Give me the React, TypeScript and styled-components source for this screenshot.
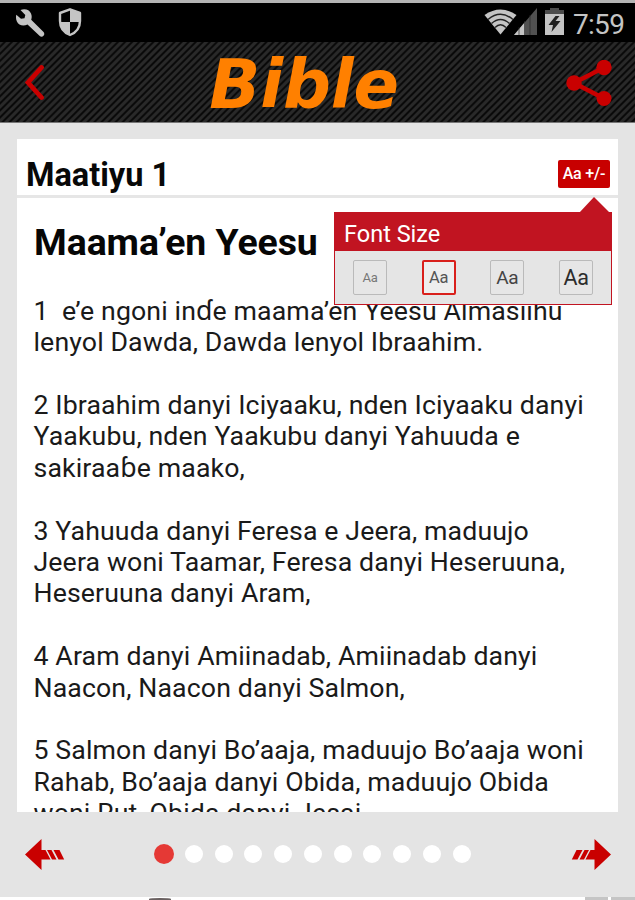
import React from "react";
import styled, { createGlobalStyle } from "styled-components";

const Global = createGlobalStyle`
  * { box-sizing: border-box; }
  body { margin: 0; background: #fff; font-family: Roboto, "Noto Sans", sans-serif; }
`;

const Screen = styled.div`
  width: 635px;
  height: 900px;
  overflow: hidden;
  display: flex;
  flex-direction: column;
  background: #e4e4e4;
`;

const StatusBar = styled.div`
  height: 42px;
  flex: none;
  background: #000;
  border-top: 3px solid #b4b4b4;
  display: flex;
  justify-content: space-between;
  padding: 0 9px 0 16px;
`;

const StatusGroup = styled.div`
  display: flex;
  padding-top: 6px;
`;

const Icon = styled.svg<{ $gap?: number; $top?: number }>`
  display: block;
  flex: none;
  margin-right: ${(p) => p.$gap ?? 0}px;
  margin-top: ${(p) => p.$top ?? 0}px;
`;

const Clock = styled.span`
  font-size: 28px;
  line-height: 31px;
  width: 53px;
  letter-spacing: -0.7px;
  white-space: nowrap;
  color: #c4c4c4;
`;

const TitleBar = styled.header`
  height: 81px;
  flex: none;
  display: flex;
  justify-content: space-between;
  padding: 0 23px 0 25px;
  border-bottom: 1px solid #777;
  background: repeating-linear-gradient(135deg, #292929 0 1.8px, #090909 3px 3.8px, #292929 5px);
`;

const Title = styled.h1`
  margin: 0 0 0 -3px;
  font: italic bold 67px/86px "DejaVu Sans", sans-serif;
  letter-spacing: -0.2px;
  color: #ff8000;
`;

const Card = styled.main`
  margin: 16px 17px 0;
  height: 673px;
  flex: none;
  background: #fff;
  position: relative;
  display: flex;
  flex-direction: column;
`;

const CardHead = styled.div`
  height: 59px;
  flex: none;
  border-bottom: 3px solid #e6e6e6;
  display: flex;
  justify-content: space-between;
  padding: 0 8px 0 9px;
`;

const Chapter = styled.h2`
  margin: 0;
  font-size: 32.5px;
  font-weight: 700;
  line-height: 73px;
  color: #080808;
`;

const SizeToggle = styled.button`
  width: 52px;
  height: 28px;
  margin-top: 21px;
  padding: 0;
  border: 0;
  border-radius: 2px;
  background: #c80000;
  color: #fff;
  font: 500 16px/28px Roboto, sans-serif;
  letter-spacing: -0.2px;
  white-space: nowrap;
`;

const Passage = styled.article`
  flex: 1;
  min-height: 0;
  overflow: hidden;
  padding: 23px 0 0 17px;
`;

const PassageTitle = styled.h3`
  margin: 0 0 31.8px;
  font-size: 37.4px;
  font-weight: 700;
  line-height: 43px;
  letter-spacing: -0.05px;
  color: #060606;
`;

const Verse = styled.p`
  margin: 0 0 31.4px;
`;

const Line = styled.span`
  display: block;
  width: max-content;
  font-size: 26.7px;
  line-height: 31.4px;
  white-space: pre;
  letter-spacing: 0.12px;
  margin-left: -0.5px;
  color: #1a1a1a;
`;

const Popover = styled.section`
  position: absolute;
  top: 73px;
  left: 317px;
  width: 278px;
  height: 93px;
  border: 1px solid #c11421;
  background: #e5e5e5;
`;

const Pointer = styled.svg`
  position: absolute;
  right: 0;
  top: -16px;
`;

const PopoverHead = styled.div`
  height: 38px;
  padding-left: 9px;
  font-size: 23.5px;
  line-height: 42px;
  color: #fff;
  background: #c11421;
`;

const Options = styled.div`
  display: flex;
  justify-content: space-between;
  padding: 9px 18px 0;
`;

const Option = styled.button<{ $size: number; $active?: boolean; $color: string }>`
  width: 34px;
  height: 35px;
  padding: 0;
  border: ${(p) => (p.$active ? "2px solid #d9201c" : "1px solid #bababa")};
  border-radius: 2px;
  background: ${(p) => (p.$active ? "#eeeeee" : "#e6e6e6")};
  font-family: Roboto, sans-serif;
  font-size: ${(p) => p.$size}px;
  line-height: 30px;
  letter-spacing: -0.3px;
  color: ${(p) => p.$color};
`;

const Pager = styled.nav`
  height: 85px;
  flex: none;
  display: flex;
  align-items: center;
  padding: 0 24px 1px 25px;
`;

const Dots = styled.div`
  display: flex;
  align-items: center;
  gap: 11.75px;
  margin: 0 auto 0 90px;
`;

const Dot = styled.i<{ $active?: boolean }>`
  width: 18px;
  height: 18px;
  border-radius: 50%;
  background: ${(p) => (p.$active ? "#e53935" : "#fff")};
  transform: scale(${(p) => (p.$active ? 1.11 : 1)});
`;

const NextPage = styled.div`
  height: 3px;
  flex: none;
  background: #fff;
  display: flex;
`;

const Knob = styled.i`
  width: 22px;
  height: 2px;
  margin: 1px 0 0 149px;
  border-radius: 50% 50% 0 0;
  background: #6a6161;
`;

const Tab = styled.i<{ $left: number; $width: number }>`
  margin-left: ${(p) => p.$left}px;
  width: ${(p) => p.$width}px;
  background: #c5c5c5;
`;

const sizes = [
  { size: 13, color: "#777" },
  { size: 16.5, color: "#555", active: true },
  { size: 19, color: "#444" },
  { size: 21.5, color: "#2c2c2c" },
];

const verses = [
  ["1  e’e ngoni inɗe maama’en Yeesu Almasiihu", "lenyol Dawda, Dawda lenyol Ibraahim."],
  ["2 Ibraahim danyi Iciyaaku, nden Iciyaaku danyi", "Yaakubu, nden Yaakubu danyi Yahuuda e", "sakiraaɓe maako,"],
  ["3 Yahuuda danyi Feresa e Jeera, maduujo", "Jeera woni Taamar, Feresa danyi Heseruuna,", "Heseruuna danyi Aram,"],
  ["4 Aram danyi Amiinadab, Amiinadab danyi", "Naacon, Naacon danyi Salmon,"],
  ["5 Salmon danyi Bo’aaja, maduujo Bo’aaja woni", "Rahab, Bo’aaja danyi Obida, maduujo Obida", "woni Rut, Obida danyi Jesai,"],
];

const ArrowShape = () => (
  <g fill="#c90000">
    <path d="M0 15.500 16.500 0v11H20.500l5 9.500h-9v10.500Z" />
    <path d="M22 11h4.500l5 9.500h-4.500ZM28.500 11h6l4.700 9.500h-5.700Z" />
  </g>
);

export default function App() {
  return (
    <>
      <Global />
      <Screen>
        <StatusBar>
          <StatusGroup>
            <Icon width="29" height="29" viewBox="0 0 29 29" $gap={13}>
              <path d="M4.500 1C9-.8 13.500.8 15 4.500c1 2.300.8 4.300.2 6.200L27.300 22.800c2.800 3-1 6.500-3.800 4L11.500 15.500C7 18 2.500 16 .9 12.500-.2 10-.2 8 .3 5.700L5 9.700l3.500-.5L9.300 6Z" fill="#c4c4c4" />
            </Icon>
            <Icon width="25" height="29" viewBox="0 0 25 29" $top={-1}>
              <path d="M12 1.300 22 5v8c0 7-3.700 11.500-10 14C5.700 24.500 2 20 2 13V5Z" fill="#000" stroke="#c4c4c4" strokeWidth="2.400" strokeLinejoin="round" />
              <path d="M12 1.300 22 5v9H12ZM2 14h10v13C5.700 24.500 2 20 2 14Z" fill="#c4c4c4" />
            </Icon>
          </StatusGroup>
          <StatusGroup>
            <Icon width="33" height="26" viewBox="0 0 33 26" $gap={-3}>
              <path d="M.5 6Q16.500-5 32.500 6L16.500 25.500Z" fill="#c4c4c4" />
              <path d="M4 10.500Q16.500 0 29 10.500M7.500 14.500Q16.500 6.500 25.500 14.500M11 18.500Q16.500 13 22 18.500" fill="none" stroke="#222" strokeWidth="1.500" />
            </Icon>
            <Icon width="24" height="27" viewBox="0 0 24 27" $gap={7} $top={-1}>
              <path d="M0 27 23 0v27Z" fill="#515151" />
              <path d="M0 27 11 14v13Z" fill="#c4c4c4" />
              <path d="M5 19v8M10.500 13v14M16 7v20" stroke="#252525" strokeWidth=".7" />
            </Icon>
            <Icon width="19" height="27" viewBox="0 0 19 27" $gap={9} $top={-1}>
              <path d="M5 0h9v2h5v4H0V2h5Z" fill="#4c4c4c" />
              <path d="M0 6h19v21H0Z" fill="#c4c4c4" />
              <path d="m10.500 8-7 9h4.500l-1.500 7 9-11h-5l4-5Z" fill="#202020" />
            </Icon>
            <Clock>7:59</Clock>
          </StatusGroup>
        </StatusBar>
        <TitleBar>
          <Icon width="20" height="36" viewBox="0 0 20 36" $top={23}>
            <path d="M16.500 2.500 3 17.500 16.500 32.500" fill="none" stroke="#c90000" strokeWidth="4.800" strokeLinecap="round" />
          </Icon>
          <Title>Bible</Title>
          <Icon width="46" height="46" viewBox="0 0 46 46" $top={18}>
            <path d="M38 7.500 8 23l30 15.500" fill="none" stroke="#c90000" strokeWidth="4.500" />
            <g fill="#c90000"><circle cx="38" cy="7.500" r="7.700" /><circle cx="8" cy="23" r="7.700" /><circle cx="38" cy="38.500" r="7.500" /></g>
          </Icon>
        </TitleBar>
        <Card>
          <CardHead>
            <Chapter>Maatiyu 1</Chapter>
            <SizeToggle>Aa +/-</SizeToggle>
          </CardHead>
          <Passage>
            <PassageTitle>Maama’en Yeesu</PassageTitle>
            {verses.map((lines, i) => (
              <Verse key={i}>
                {lines.map((text) => <Line key={text}>{text}</Line>)}
              </Verse>
            ))}
          </Passage>
          <Popover>
            <Pointer width="32" height="17" viewBox="0 0 32 17">
              <path d="M0 16 15 0l16 16v1H0Z" fill="#c11421" />
            </Pointer>
            <PopoverHead>Font Size</PopoverHead>
            <Options>
              {sizes.map((s) => <Option key={s.size} $size={s.size} $color={s.color} $active={s.active}>Aa</Option>)}
            </Options>
          </Popover>
        </Card>
        <Pager>
          <Icon width="40" height="31" viewBox="0 0 40 31"><ArrowShape /></Icon>
          <Dots>
            {Array.from({ length: 11 }, (_, i) => <Dot key={i} $active={i === 0} />)}
          </Dots>
          <Icon width="40" height="31" viewBox="0 0 40 31"><g transform="translate(40 0) scale(-1 1)"><ArrowShape /></g></Icon>
        </Pager>
        <NextPage><Knob /><Tab $left={414} $width={23} /><Tab $left={3} $width={24} /></NextPage>
      </Screen>
    </>
  );
}
